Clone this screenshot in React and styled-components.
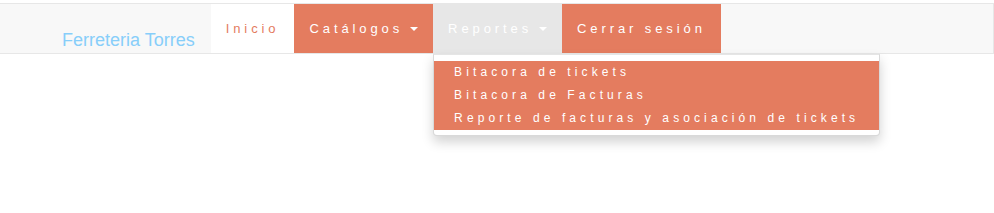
import React from "react";
import styled, { createGlobalStyle } from "styled-components";

const orange = "#e47c5f";

const GlobalStyle = createGlobalStyle`
  body {
    margin: 0;
    background: #fff;
    font-family: "Liberation Sans", Arial, sans-serif;
  }
`;

const Page = styled.div`
  padding-top: 3px;
  height: 210px;
`;

const Navbar = styled.nav`
  display: flex;
  align-items: stretch;
  min-height: 49px;
  padding-left: 47px;
  background: #f8f8f8;
  border-top: 1px solid #e7e7e7;
  border-bottom: 1px solid #e7e7e7;
  border-right: 1px solid #e7e7e7;
`;

const Brand = styled.a`
  display: block;
  padding: 26px 16px 0 15px;
  font-size: 18px;
  line-height: 20px;
  color: #87cefa;
  text-decoration: none;
  white-space: nowrap;
`;

const NavList = styled.ul`
  display: flex;
  margin: 0;
  padding: 0;
  list-style: none;
`;

const NavItem = styled.li`
  position: relative;
  display: flex;
`;

const variants = {
  active: { bg: "#fff", color: orange },
  accent: { bg: orange, color: "#fff" },
  open: { bg: "#e7e7e7", color: "#fff" },
};

const NavLink = styled.a`
  display: flex;
  align-items: center;
  padding: 15px 15px 14px;
  font-size: 13px;
  line-height: 20px;
  letter-spacing: 3.9px;
  white-space: nowrap;
  text-decoration: none;
  background: ${p => variants[p.$variant].bg};
  color: ${p => variants[p.$variant].color};
`;

const Caret = styled.span`
  display: inline-block;
  width: 0;
  height: 0;
  margin-left: 7px;
  border-top: 4px solid currentColor;
  border-left: 4px solid transparent;
  border-right: 4px solid transparent;
`;

const Dropdown = styled.ul`
  position: absolute;
  top: calc(100% + 1px);
  left: 0;
  z-index: 10;
  margin: 0;
  padding: 6px 0 5px;
  list-style: none;
  background: #fff;
  border: 1px solid rgba(0, 0, 0, 0.15);
  border-top-color: rgba(0, 0, 0, 0.1);
  border-radius: 0 0 4px 4px;
  box-shadow: 0 6px 12px rgba(0, 0, 0, 0.175);
`;

const DropdownItem = styled.li`
  a {
    display: block;
    padding: 3px 20px;
    font-size: 12px;
    line-height: 17px;
    letter-spacing: 4.1px;
    white-space: nowrap;
    color: #fff;
    background: ${orange};
    text-decoration: none;
  }
`;

const reportes = [
  "Bitacora de tickets",
  "Bitacora de Facturas",
  "Reporte de facturas y asociación de tickets",
];

const App = () => {
  return (
    <Page>
      <GlobalStyle />
      <Navbar>
        <Brand href="#">Ferreteria Torres</Brand>
        <NavList>
          <NavItem>
            <NavLink $variant="active" href="#">Inicio</NavLink>
          </NavItem>
          <NavItem>
            <NavLink $variant="accent" href="#">
              Catálogos<Caret />
            </NavLink>
          </NavItem>
          <NavItem>
            <NavLink $variant="open" href="#">
              Reportes<Caret />
            </NavLink>
            <Dropdown>
              {reportes.map(r => (
                <DropdownItem key={r}>
                  <a href="#">{r}</a>
                </DropdownItem>
              ))}
            </Dropdown>
          </NavItem>
          <NavItem>
            <NavLink $variant="accent" href="#">Cerrar sesión</NavLink>
          </NavItem>
        </NavList>
      </Navbar>
    </Page>
  );
};

export default App;
